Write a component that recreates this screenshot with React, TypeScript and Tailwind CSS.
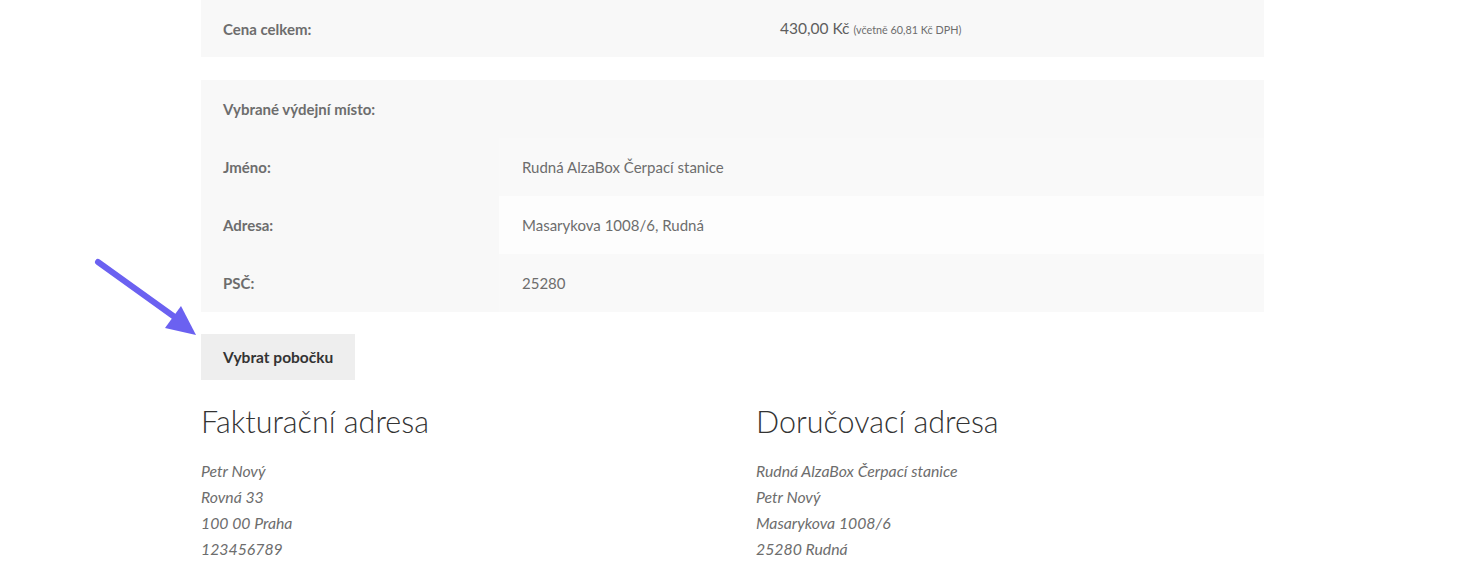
const pickupRows = [
  { label: 'Jméno:', value: 'Rudná AlzaBox Čerpací stanice', bg: 'bg-[#f9f9f9]' },
  { label: 'Adresa:', value: 'Masarykova 1008/6, Rudná', bg: 'bg-[#fdfdfd]' },
  { label: 'PSČ:', value: '25280', bg: 'bg-[#f9f9f9]' },
];

const billing = ['Petr Nový', 'Rovná 33', '100 00 Praha', '123456789'];
const shipping = ['Rudná AlzaBox Čerpací stanice', 'Petr Nový', 'Masarykova 1008/6', '25280 Rudná'];

function Arrow() {
  return (
    <svg className="absolute left-0 top-0 pointer-events-none" width="220" height="360" viewBox="0 0 220 360">
      <line x1="98" y1="262" x2="176" y2="318" stroke="#6b61f1" strokeWidth="6" strokeLinecap="round" />
      <polygon points="181,306 165,328 196,335" fill="#6b61f1" />
    </svg>
  );
}

export default function App() {
  return (
    <div className="relative min-h-[585px] bg-white font-['Lato',sans-serif] text-[15px] leading-[26px] text-[#6d6d6d]">
      <Arrow />
      <div className="ml-[201px] w-[1063px]">
        {/* total */}
        <div className="grid h-[57px] grid-cols-[556px_1fr] items-center bg-[#f8f8f8]">
          <div className="px-[22px] font-bold">Cena celkem:</div>
          <div className="px-[23px] leading-none">
            <span className="text-[15.5px] text-[#5e5e5e]">430,00 Kč</span>{' '}
            <span className="text-[10.8px]">(včetně 60,81 Kč DPH)</span>
          </div>
        </div>

        {/* pickup point */}
        <div className="mt-[23px]">
          <div className="bg-[#f8f8f8] px-[22px] py-4 font-bold">Vybrané výdejní místo:</div>
          {pickupRows.map((r) => (
            <div key={r.label} className="grid grid-cols-[298px_1fr]">
              <div className="bg-[#f8f8f8] px-[22px] py-4 font-bold">{r.label}</div>
              <div className={`${r.bg} px-[23px] py-4`}>{r.value}</div>
            </div>
          ))}
        </div>

        <button className="mt-[22px] bg-[#eeeeee] px-[22px] py-[10px] text-[15.5px] font-bold text-[#333333]">
          Vybrat pobočku
        </button>

        <div className="mt-[22px] flex justify-between">
          <div className="w-[508px]">
            <h2 className="mb-[17px] text-[30.5px] font-light leading-[39px] text-[#333333]">Fakturační adresa</h2>
            <address className="text-[15.8px] italic leading-[25.9px]">
              {billing.map((l) => (
                <div key={l}>{l}</div>
              ))}
            </address>
          </div>
          <div className="w-[508px]">
            <h2 className="mb-[17px] text-[30.5px] font-light leading-[39px] text-[#333333]">Doručovací adresa</h2>
            <address className="text-[15.8px] italic leading-[25.9px]">
              {shipping.map((l) => (
                <div key={l}>{l}</div>
              ))}
            </address>
          </div>
        </div>
      </div>
    </div>
  );
}
